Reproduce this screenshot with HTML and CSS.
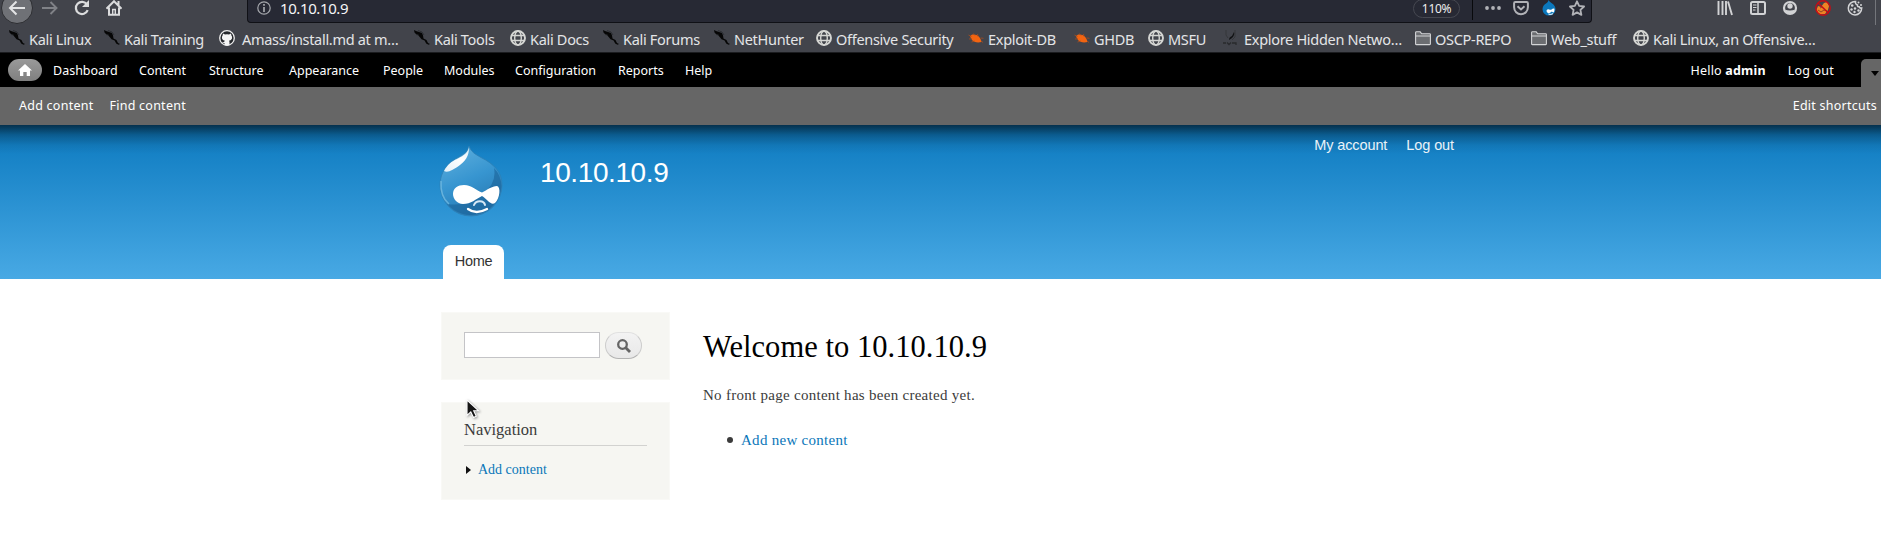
FILE: index.html
```html
<!DOCTYPE html>
<html lang="en">
<head>
<meta charset="utf-8">
<title>Welcome to 10.10.10.9 | 10.10.10.9</title>
<link rel="stylesheet" href="styles.css">
</head>
<body>
<svg class="defs" width="0" height="0">
  <symbol id="kali" viewBox="0 0 16 16"><path d="M0 0l2 1 3 1 3 1 1 2.500 .5 3 3 1.500 1.500 3L16 14l-1.500.8-2.300-1.300-1.600-3-3-1.200-1.700-2L4 5 2 4 .5 2.500z" fill="#060606"/><path d="M4 .5l4 1.500 2 3M2 4.500l3 .7" stroke="#24262a" stroke-width=".7" fill="none"/></symbol>
  <symbol id="globe" viewBox="0 0 16 16"><g fill="none" stroke="#d5d6d3" stroke-width="1.900"><circle cx="8" cy="8" r="7"/><ellipse cx="8" cy="8" rx="3.300" ry="7" stroke-width="1.400"/><path d="M1.500 5.500h13M1.500 10.500h13" stroke-width="1.400"/></g></symbol>
  <symbol id="bug" viewBox="0 0 16 16"><path d="M2 6.500C3 4 6 4 8.500 5s4.500 4 5 7C10 13 5.500 12.300 4 10z" fill="#f26411"/><path d="M.5 5l3 1.500M1 9l3-.2M3.500 12l3-1M5.500 3.500l1.500 2M9.500 4l.5 2.500M12.500 8l3 .3M13 11l2 1.500" stroke="#a94d1d" stroke-width=".8"/></symbol>
  <symbol id="folder" viewBox="0 0 16 16"><path d="M.6 14V2.600q0-.8.8-.8h3.800l1.500 2h8q.7 0 .7.700V14q0 .6-.7.600H1.300Q.6 14.600.6 14z" fill="#6b6d71" stroke="#d4d5d7" stroke-width="1.100"/><path d="M1 6h14" stroke="#d4d5d7"/></symbol>
</svg>

<header class="browser">
  <div class="navbar">
    <div class="nav-buttons">
      <span class="back"><svg width="18" height="16" viewBox="0 0 18 16"><path d="M17 8H2.500M8.500 1.500L2 8l6.500 6.500" fill="none" stroke="#e3e4e5" stroke-width="2"/></svg></span>
      <svg width="16" height="16" viewBox="0 0 16 16"><path d="M0 8h14M8.500 2l6 6-6 6" fill="none" stroke="#808287" stroke-width="1.900"/></svg>
      <svg width="16" height="16" viewBox="0 0 16 16"><path d="M13.700 10.200A6.100 6.100 0 1 1 13 4.500" fill="none" stroke="#dbdcdd" stroke-width="2.200"/><path d="M15 0v7H8z" fill="#dbdcdd"/></svg>
      <svg width="16" height="16" viewBox="0 0 16 16"><path d="M.5 8.700L8 1.200l7.500 7.500M3 7.500v7.300h10V7.500M12.500 1v4" fill="none" stroke="#dbdcdd" stroke-width="2"/><path d="M6.700 14V9.500h2.600V14" fill="none" stroke="#dbdcdd" stroke-width="1.400"/></svg>
    </div>
    <div class="urlbar">
      <svg width="14" height="14" viewBox="0 0 14 14"><circle cx="7" cy="7" r="6.200" fill="none" stroke="#a5a7ac" stroke-width="1.200"/><path d="M7 6v5M7 3v1.800" stroke="#a5a7ac" stroke-width="1.700"/></svg>
      <span class="address">10.10.10.9</span>
      <span class="zoom">110%</span>
      <span class="rule"></span>
      <div class="page-actions">
        <svg width="16" height="16" viewBox="0 0 16 16"><g fill="#b1b2b7"><circle cx="2" cy="8" r="1.900"/><circle cx="8" cy="8" r="1.900"/><circle cx="14" cy="8" r="1.900"/></g></svg>
        <svg width="16" height="16" viewBox="0 0 16 16"><path d="M2.300 2h11.400q1.200 0 1.200 1.200V7.300a6.900 6.900 0 0 1-13.800 0V3.200Q1.100 2 2.300 2z" fill="none" stroke="#b1b2b7" stroke-width="2"/><path d="M4.500 6.200L8 9.500l3.500-3.300" fill="none" stroke="#b1b2b7" stroke-width="1.900"/></svg>
        <svg width="16" height="16" viewBox="0 0 16 16"><path d="M7.500 0q1 2 3.300 3.300c2.500 1.700 3.700 3.500 3.700 6a6.500 6.300 0 0 1-13 0C1.500 6.500 3 4.800 5 3.500 6.500 2.500 7.300 1.500 7.500 0z" fill="#0b78bd"/><path d="M5.500 10.500q1-2 3.500-.8 1 .3 1.500-.2 1.500-1.500 3-.8 0 3-.8 3.800-1-.2-1.800-1-2.500 2.200-4 1.500-1.500-.8-1.400-2.500z" fill="#fff"/><path d="M7.500 14.200q2.500.6 4.500-.5" stroke="#fff" fill="none"/></svg>
        <svg width="16" height="16" viewBox="0 0 16 16"><path d="M8 1.300l2.100 4.600 5 .6-3.700 3.400 1 5L8 12.400l-4.400 2.500 1-5L.9 6.500l5-.6z" fill="none" stroke="#b1b2b7" stroke-width="1.800" stroke-linejoin="round"/></svg>
      </div>
    </div>
    <div class="tools">
      <svg width="16" height="16" viewBox="0 0 16 16"><path d="M1.500 1v14M5.500 1v14M9 1v14M11 1.500L15 15" stroke="#d2d3d5" stroke-width="1.900"/></svg>
      <svg width="16" height="16" viewBox="0 0 16 16"><rect x="1" y="2" width="14" height="12" rx="1.500" fill="none" stroke="#d2d3d5" stroke-width="2"/><path d="M8 2v12" stroke="#d2d3d5" stroke-width="1.500"/><path d="M3 5h3.500M3 7.500h3.500M3 10h2.500" stroke="#d2d3d5"/></svg>
      <svg width="16" height="16" viewBox="0 0 16 16"><circle cx="8" cy="8" r="6" fill="none" stroke="#d2d3d5" stroke-width="2.200"/><circle cx="8" cy="6" r="2.700" fill="#d2d3d5"/><path d="M3 9.800q5 1.500 10 0-1 4.200-5 4.200T3 9.800z" fill="#d2d3d5"/></svg>
      <svg width="16" height="16" viewBox="0 0 16 16"><path d="M1 11l2-5 3 1 3-4 3-1 2 4-1 4-3 4-6 .5z" fill="#ed8425"/><path d="M3 10l3 2 3-2 3 1M5 8l2-1" stroke="#8f4b25" fill="none"/><circle cx="8" cy="8" r="7.200" fill="none" stroke="#c50c16" stroke-width="1.400"/><path d="M3 3l10.500 10" stroke="#c50c16" stroke-width="1.500"/></svg>
      <svg width="16" height="16" viewBox="0 0 16 16"><path d="M8.500 1.500a6.700 6.700 0 1 0 6.200 6.500q-2 .5-2.500-1.200-2 .3-1.700-1.800-2.500-.8-2-3.500z" fill="none" stroke="#d2d3d5" stroke-width="1.500"/><g fill="#d2d3d5"><circle cx="5.200" cy="5.500" r="1.300"/><circle cx="4.500" cy="9.500" r="1.200"/><circle cx="8" cy="8.500" r="1.200"/><circle cx="7.500" cy="12" r="1.200"/><circle cx="11.500" cy="10.500" r="1.200"/><circle cx="11.500" cy="2.500" r="1"/><circle cx="14" cy="5" r="1"/></g></svg>
      <span class="tools-rule"></span>
    </div>
  </div>
  <nav class="bookmarks">
    <a><svg><use href="#kali"/></svg><span>Kali Linux</span></a>
    <a><svg><use href="#kali"/></svg><span>Kali Training</span></a>
    <a class="github"><svg viewBox="0 0 16 16"><circle cx="8" cy="8" r="7.300" fill="#25282c" stroke="#eee" stroke-width="1.300"/><path d="M4 3.500l2 1q2-.5 4 0l2-1 .4 2q1 1.200.6 3-.6 2-3 2.300.5.700.5 1.700v2.500q-2.500 1-5 0v-2q-2 .3-2.500-1.200 1.500 1 2.600-.5l.3-.5Q3.500 10.500 3 8.500q-.3-1.800.6-3z" fill="#f5f5f5"/></svg><span>Amass/install.md at m…</span></a>
    <a><svg><use href="#kali"/></svg><span>Kali Tools</span></a>
    <a><svg><use href="#globe"/></svg><span>Kali Docs</span></a>
    <a><svg><use href="#kali"/></svg><span>Kali Forums</span></a>
    <a><svg><use href="#kali"/></svg><span>NetHunter</span></a>
    <a><svg><use href="#globe"/></svg><span>Offensive Security</span></a>
    <a><svg><use href="#bug"/></svg><span>Exploit-DB</span></a>
    <a><svg><use href="#bug"/></svg><span>GHDB</span></a>
    <a><svg><use href="#globe"/></svg><span>MSFU</span></a>
    <a class="hidden-net"><svg viewBox="0 0 16 16"><path d="M4 0v5l2 3M13 0v7l-3 3" stroke="#34363a" fill="none"/><path d="M12 2q1 3-2 6l-3 2q0-3 3-4z" fill="#101113"/><path d="M1 13h3M5 12.500l2 2 2-2M10 13h4v2" stroke="#292a2d" fill="none" stroke-width="1.300"/></svg><span>Explore Hidden Netwo…</span></a>
    <a><svg><use href="#folder"/></svg><span>OSCP-REPO</span></a>
    <a><svg><use href="#folder"/></svg><span>Web_stuff</span></a>
    <a><svg><use href="#globe"/></svg><span>Kali Linux, an Offensive…</span></a>
  </nav>
</header>

<div class="toolbar">
  <a class="home"><svg width="14" height="12" viewBox="0 0 14 12"><path d="M7 0l7 6.500h-2V12H8.700V8H5.300v4H2V6.500H0z" fill="#fff"/></svg></a>
  <nav class="menu"><a>Dashboard</a><a>Content</a><a>Structure</a><a>Appearance</a><a>People</a><a>Modules</a><a>Configuration</a><a>Reports</a><a>Help</a></nav>
  <div class="user"><span>Hello <b>admin</b></span><a>Log out</a></div>
  <span class="toggle"></span>
</div>
<div class="shortcuts"><a>Add content</a><a>Find content</a><a class="edit">Edit shortcuts</a></div>

<div class="site-header">
  <div class="header-inner">
    <svg class="logo" width="64" height="72" viewBox="0 0 64 72">
      <defs>
        <linearGradient id="drop" x1=".2" y1="0" x2=".6" y2="1"><stop offset="0" stop-color="#5eafdd"/><stop offset=".5" stop-color="#3795d0"/><stop offset="1" stop-color="#2677b0"/></linearGradient>
        <linearGradient id="shine" x1="1" y1="0" x2="0" y2="1"><stop offset="0" stop-color="#fff" stop-opacity=".8"/><stop offset=".4" stop-color="#fff"/><stop offset="1" stop-color="#fff" stop-opacity=".85"/></linearGradient>
      </defs>
      <path d="M30 1C32 7 36 9 42 12.500 55 19 63 27 63 40A31 31 0 0 1 1 40C1 27 9 18 17 13.500 25 9 29 7 30 1z" fill="url(#drop)" stroke="#2d7fb4" stroke-width=".8"/>
      <path d="M55 23Q62 30 62.500 41A31 31 0 0 1 8 59Q28 62 43 49 58 39 55 23z" fill="#1b6298" opacity=".6"/>
      <path d="M2 36Q1 52 10 59" stroke="#7bc0e4" stroke-width="1.500" fill="none" opacity=".7"/>
      <path d="M30 2C30 8 29 14 21 20 14 25 9 28 5 26 8 20 13 16 18 14 26 10 29 7 30 2z" fill="url(#shine)"/>
      <path d="M14 49C14 43 19 40 25 40 33 40 38 46 43 47.500 48 45 53 41 58 41 62 42 61 53 56 58 52 61 48 54 43 51 37 54 32 59 24 59 18 58.500 14 54 14 49z" fill="#fff"/>
      <path d="M35 60C37 55 45 55 46 60" fill="none" stroke="#d6e9f6" stroke-width="2" stroke-linecap="round"/>
      <path d="M29 64Q37 70 48 64" fill="none" stroke="#fff" stroke-width="2.300" stroke-linecap="round"/>
    </svg>
    <div class="site-name">10.10.10.9</div>
    <nav class="account"><a>My account</a><a>Log out</a></nav>
  </div>
  <a class="tab">Home</a>
</div>

<div class="page">
  <aside>
    <form class="block search">
      <input type="text" aria-label="Search">
      <button type="button" aria-label="Search"><svg width="14" height="14" viewBox="0 0 14 14"><circle cx="5.500" cy="5.500" r="4.300" fill="none" stroke="#656565" stroke-width="2.300"/><path d="M8.500 8.500l4.500 4.500" stroke="#656565" stroke-width="2.800"/></svg></button>
    </form>
    <section class="block navigation">
      <h2>Navigation</h2>
      <a><svg width="5" height="8" viewBox="0 0 5 8"><path d="M0 0l5 4-5 4z" fill="#111"/></svg><span>Add content</span></a>
    </section>
  </aside>
  <main>
    <h1>Welcome to 10.10.10.9</h1>
    <p>No front page content has been created yet.</p>
    <ul><li><a>Add new content</a></li></ul>
  </main>
</div>
<svg class="cursor" width="14" height="20" viewBox="0 0 14 20"><path d="M1 1v15.500l3.800-3.600 2.700 5.600 2.800-1.300-2.600-5.400h5z" fill="#151515" stroke="#fff" stroke-width="1.100"/></svg>
</body>
</html>
```
FILE: styles.css
```css
* { box-sizing: border-box; }
body { margin: 0; width: 1881px; height: 534px; overflow: hidden; background: #fff; font-family: "Liberation Serif", serif; color: #3b3b3b; }
svg { display: block; flex: none; }
.defs { position: absolute; }

/* Browser chrome */
.browser { height: 53px; background: #42444b; color: #e4e5e7; font-family: "Noto Sans", sans-serif; }
.navbar { display: flex; height: 23px; }
.nav-buttons { display: flex; align-items: center; height: 16px; width: 247px; padding-left: 1px; }
.nav-buttons svg + svg, .nav-buttons .back + svg { margin-right: 16px; }
.back { display: flex; align-items: center; justify-content: center; flex: none; width: 32px; height: 32px; margin-right: 9px; border: 1px solid #2d2e32; border-radius: 50%; background: #6f7176; }
.urlbar { display: flex; align-items: center; width: 1345px; height: 23px; padding: 0 7px 6px 9px; background: #272934; border: solid #101116; border-width: 0 1px 1px; border-radius: 0 0 4px 4px; }
.address { margin-left: 9px; font-size: 15px; line-height: 16px; letter-spacing: -.4px; color: #f5f5f7; flex: 1; }
.zoom { width: 47px; height: 19px; border: 1px solid #464851; border-radius: 10px; font-size: 12px; line-height: 17px; letter-spacing: -.3px; text-align: center; color: #eee; }
.rule { width: 1px; height: 23px; margin: 0 12px; background: #08090c; }
.page-actions { display: flex; gap: 12px; margin-right: -1px; }
.tools { display: flex; align-items: center; gap: 16.500px; height: 16px; padding-left: 125px; }
.tools-rule { width: 1px; height: 34px; margin-left: -5px; background: #74767b; }
.bookmarks { display: grid; height: 30px; padding: 1px 0 0 9px; align-items: center; grid-template-columns: 95px 115px 195px 96px 93px 111px 102px 152px 106px 74px 74px 193px 116px 102px 200px; border-bottom: 1px solid #1b1c1f; }
.bookmarks a { display: flex; align-items: center; gap: 5px; height: 24px; font-size: 14.500px; letter-spacing: -.3px; white-space: nowrap; }
.bookmarks span { margin: 1px 0 0 -1px; }
.bookmarks svg { width: 16px; height: 16px; }
.bookmarks .github { gap: 8px; }
.bookmarks .hidden-net { gap: 7px; }

/* Admin toolbar */
.toolbar { display: flex; align-items: center; height: 34px; padding-left: 8px; background: #000; color: #fff; font: 12.500px/20px "Noto Sans", sans-serif; }
.home { display: flex; align-items: center; justify-content: center; width: 34px; height: 22px; border-radius: 11px; background: linear-gradient(#9a9a9a, #7f7f7f); }
.menu { display: grid; margin: 2px 0 0 11px; grid-template-columns: 86px 70px 80px 94px 61px 71px 103px 67px 60px; }
.user { display: flex; gap: 22px; margin: 2px 27px 0 auto; letter-spacing: .2px; }
.toggle { width: 20px; height: 28px; align-self: flex-end; border-radius: 5px 0 0; background: #666; display: flex; align-items: center; padding-left: 10px; }
.toggle::before { content: ""; border: solid transparent; border-width: 5px 4px 0; border-top-color: #000; }
.shortcuts { display: flex; gap: 16px; align-items: center; height: 38px; padding: 0 4px 0 19px; background: #666; color: #fff; font: 12.500px/20px "Noto Sans", sans-serif; letter-spacing: .25px; }
.edit { margin-left: auto; }

/* Site header */
.site-header { height: 154px; padding-left: 439px; color: #fff; font-family: "Liberation Sans", sans-serif; background: linear-gradient(rgba(0,0,0,.6), rgba(0,0,0,.26) 10px, rgba(0,0,0,.07) 20px, transparent 29px), linear-gradient(#0b79bf, #48a9e4); }
.header-inner { display: flex; height: 120px; width: 1015px; padding-top: 20px; }
.site-name { margin: 12px 0 0 37px; font-size: 28px; line-height: 32px; letter-spacing: -.4px; }
.account { display: flex; gap: 19px; margin: -9px 0 0 auto; font-size: 14.500px; line-height: 18px; letter-spacing: -.1px; color: #e9f2f8; }
.tab { display: block; width: 61px; height: 34px; margin-left: 4px; border-radius: 8px 8px 0 0; background: #fff; color: #333; font-size: 14.500px; letter-spacing: -.3px; line-height: 32px; text-align: center; }

/* Page content */
.page { display: flex; gap: 33px; padding: 33px 0 0 441px; }
aside { width: 229px; }
.block { background: #f6f6f2; border: 1px solid #f9f9f6; }
.search { display: flex; gap: 5px; height: 68px; padding: 19px 22px; }
.search input { width: 136px; height: 26px; margin: 0; padding: 0; border: 1px solid #c4c4c7; background: #fff; }
.search button { display: flex; align-items: center; justify-content: center; width: 37px; height: 27px; padding: 0; border: 1px solid; border-color: #e1e1e1 #ccc #b3b3b3; border-radius: 14px; background: linear-gradient(#f3f3f3, #e8e8e8); }
.navigation { height: 98px; margin-top: 22px; padding: 16px 22px; }
h2 { margin: 0 0 14px; height: 27px; border-bottom: 1px solid #d2d2d0; font-size: 16.500px; line-height: 21px; font-weight: 400; }
.navigation a { display: flex; align-items: center; gap: 7px; padding-left: 2px; font-size: 14px; line-height: 20px; color: #0a76b9; }
h1 { margin: 17px 0 0; color: #000; font-size: 30.500px; line-height: 36px; font-weight: 400; letter-spacing: .05px; }
p { margin: 19px 0 0; font-size: 15px; line-height: 22px; letter-spacing: .28px; }
ul { margin: 23px 0 0; padding-left: 38px; font-size: 15px; line-height: 22px; letter-spacing: .28px; list-style: none; }
li { display: flex; align-items: center; }
li::before { content: ""; width: 6px; height: 6px; margin: 0 8px 0 -14px; border-radius: 50%; background: #3b3b3b; }
main a { color: #0a76b9; }
.cursor { position: absolute; left: 466px; top: 399px; filter: drop-shadow(1px 1px 1px #999); }
```
